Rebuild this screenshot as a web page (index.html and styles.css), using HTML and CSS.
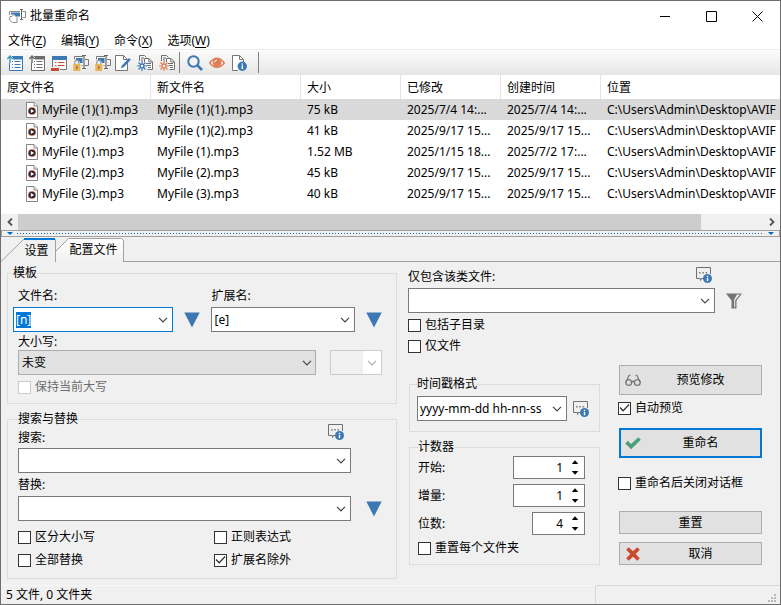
FILE: index.html
```html
<!DOCTYPE html>
<html lang="zh-CN">
<head>
<meta charset="utf-8">
<title>批量重命名</title>
<link rel="stylesheet" href="styles.css">
</head>
<body>
<svg class="defs" aria-hidden="true">
  <symbol id="chevron" viewBox="0 0 10 6"><path d="M1 .8 5 4.8 9 .8" fill="none" stroke="currentColor" stroke-width="1.2"/></symbol>
  <symbol id="triangle" viewBox="0 0 16 16"><path d="M.3 .5H15.7L8 15.5Z" fill="#3c78b4"/></symbol>
  <symbol id="help" viewBox="0 0 16 16">
    <path d="M7 11.5H5.5L4.5 13.5V11.5H.5V.5H14.5V7" fill="none" stroke="#707070"/>
    <path d="M3 5H4.6V6.6H3ZM6.3 5H7.9V6.6H6.3ZM9.6 5H11.2V6.6H9.6Z" fill="#808080"/>
    <circle cx="11.5" cy="11.5" r="4.5" fill="#3c78b4"/><path d="M10.8 8.8H12.2V10H10.8ZM10.8 10.7H12.2V14.2H10.8Z" fill="#fff"/>
  </symbol>
  <symbol id="mp3" viewBox="0 0 12 16">
    <path d="M.5 .5H8L11.5 4V15.5H.5Z" fill="#fff" stroke="#858585"/><path d="M8 .5V4H11.5" fill="#eee" stroke="#858585"/>
    <circle cx="6" cy="9" r="4.1" fill="#ee9470"/><path d="M2 9A4.1 4.1 0 0 0 10 9Z" fill="#8d6490"/><circle cx="6" cy="9" r="3.3" fill="#2b2734"/><path d="M4.8 7V11L8.2 9Z" fill="#fff"/>
  </symbol>
  <symbol id="lock-rename" viewBox="0 0 16 16">
    <path d="M1.5 4.5V1.5H10M12 4.5H15.5V10.5H12M9.5 10.5H8.5" fill="none" stroke="#777"/>
    <path d="M3 3H9.5V8H7Q6.5 5 3 5Z" fill="#3c78b4"/>
    <path d="M9 .5H13M11 .5V13.5M9 13.5H13" fill="none" stroke="#666" stroke-width="1.2"/>
    <path d="M1.8 9V7.4A2 2 0 0 1 5.8 7.4V9" fill="none" stroke="#999" stroke-width="1.2"/>
    <path d="M.3 9H7.3V16H.3Z" fill="#e8b45a"/><path d="M3.2 11H4.4V14H3.2Z" fill="#8b6a2c"/>
  </symbol>
  <symbol id="gear-docs" viewBox="0 0 16 16">
    <path d="M2.5 6V.5H7.5L9.5 2.5M4 3H7M4 5H6" fill="none" stroke="#707070"/>
    <path d="M7.5 7V3.5H12L15.5 7V14.5H10.5" fill="#fff" stroke="#707070"/><path d="M11.8 3.5V7H15.5M9 8.5H14M10 10.5H14M11 12.5H14" fill="none" stroke="#707070"/>
    <path d="M5 6V16M0 11H10M1.5 7.5 8.5 14.5M8.5 7.5 1.5 14.5" stroke="currentColor" stroke-width="1.2"/><circle cx="5" cy="11" r="2.4" fill="currentColor"/><circle cx="5" cy="11" r="1.2" fill="#fff"/>
  </symbol>
</svg>

<main class="window">
  <header class="titlebar">
    <svg class="app-icon" viewBox="0 0 17 14"><path d="M.5 6V2.5H11M13.5 2.5H16.5V8.5H13.5" fill="none" stroke="#888"/><path d="M2 3.5H11V7.5H6.5L5 5.5H2Z" fill="#3c78b4"/><path d="M11 .5H14M12.5 .5V10.5M11 10.5H14" fill="none" stroke="#666"/><path d="M1 7.5H3L5 5.5 8 8.5V13.5H3.5L.5 11Z" fill="#fff" stroke="#909090"/></svg>
    <h1>批量重命名</h1>
    <div class="caption-buttons">
      <button type="button" aria-label="最小化"><svg viewBox="0 0 11 11"><path d="M0 5.5H10" stroke="#000"/></svg></button>
      <button type="button" aria-label="最大化"><svg viewBox="0 0 11 11"><path d="M.5 .5H10.5V10.5H.5Z" fill="none" stroke="#000"/></svg></button>
      <button type="button" aria-label="关闭"><svg viewBox="0 0 11 11"><path d="M.5 .5 10.5 10.5M10.5 .5 .5 10.5" stroke="#000"/></svg></button>
    </div>
  </header>

  <nav class="menubar">
    <button type="button">文件(<u>Z</u>)</button>
    <button type="button">编辑(<u>Y</u>)</button>
    <button type="button">命令(<u>X</u>)</button>
    <button type="button">选项(<u>W</u>)</button>
  </nav>

  <div class="toolbar" role="toolbar">
    <button type="button" aria-label="载入名称"><svg viewBox="0 0 16 16"><path d="M5 1.5H15.5V15.5H2.5V8" fill="#fff" stroke="#3c78b4"/><path d="M6 1H16V4.5H6Z" fill="#3c78b4"/><path d="M5 6.5H6M7.5 6.5H13.5M5 9.5H6M7.5 9.5H13.5M5 12.5H6M7.5 12.5H13.5" stroke="#3c78b4"/><path d="M3 8V1.5M.3 4 3 1 5.7 4" fill="none" stroke="#3c9bb8" stroke-width="1.4"/></svg></button>
    <button type="button" aria-label="还原名称"><svg viewBox="0 0 16 16"><path d="M5 1.5H15.5V15.5H2.5V8" fill="#fff" stroke="#6c6c6c"/><path d="M6 1H16V4.5H6Z" fill="#6c6c6c"/><path d="M5 6.5H6M7.5 6.5H13.5M5 9.5H6M7.5 9.5H13.5M5 12.5H6M7.5 12.5H13.5" stroke="#6c6c6c"/><path d="M3 8V1.5M.3 4 3 1 5.7 4" fill="none" stroke="#6c6c6c" stroke-width="1.4"/></svg></button>
    <button type="button" aria-label="移除项目"><svg viewBox="0 0 16 16"><path d="M2 5H15V14H9V11H2Z" fill="#fff"/><path d="M1 1H16V5H1Z" fill="#3c78b4"/><path d="M4 7.5H5.5M7 7.5H13.5M4 10.5H5.5M7 10.5H13.5" stroke="#cb4a2e"/><path d="M1.5 5V12M15.5 5V14.5H9" fill="none" stroke="#777"/><path d="M0 13H8V16H0Z" fill="#cb4a2e"/></svg></button>
    <button type="button" aria-label="锁定名称"><svg><use href="#lock-rename"/></svg></button>
    <button type="button" aria-label="锁定扩展名"><svg><use href="#lock-rename"/></svg></button>
    <button type="button" class="pull" aria-label="编辑名称"><svg viewBox="0 0 16 16"><path d="M.5 .5H8.5L12.5 4.5V15.5H.5Z" fill="#fff" stroke="#777"/><path d="M8.5 .5V4.5H12.5" fill="none" stroke="#777"/><path d="M7 10.5 14 3 15.8 4.8 9 12 5.7 13.5Z" fill="#3c78b4"/></svg></button>
    <button type="button" class="blue" aria-label="载入预设"><svg><use href="#gear-docs"/></svg></button>
    <button type="button" class="orange" aria-label="清除预设"><svg><use href="#gear-docs"/></svg></button>
    <span class="separator"></span>
    <button type="button" aria-label="搜索"><svg viewBox="0 0 16 16"><circle cx="6.5" cy="6.5" r="5.2" fill="none" stroke="#3c78b4" stroke-width="2"/><path d="M10.2 10.2 15 15" stroke="#3c78b4" stroke-width="2.6"/></svg></button>
    <button type="button" aria-label="查看"><svg viewBox="0 0 16 16"><path d="M.7 8Q8-1.5 15.3 8Q8 16.5 .7 8Z" fill="#fff" stroke="#e07c52" stroke-width="1.5"/><circle cx="8" cy="7.5" r="4.4" fill="#e07c52"/><path d="M5.6 7.5A2.6 2.6 0 0 1 8 5" fill="none" stroke="#fff"/></svg></button>
    <button type="button" aria-label="文件信息"><svg viewBox="0 0 16 16"><path d="M7 15.5H1.5V.5H8.5L12.5 4.5V7" fill="#fff" stroke="#777"/><path d="M8.5 .5V4.5H12.5" fill="none" stroke="#777"/><circle cx="11.3" cy="11.3" r="4.7" fill="#3c78b4"/><path d="M10.6 8.4H12V9.7H10.6ZM10.6 10.5H12V14H10.6Z" fill="#fff"/></svg></button>
    <span class="separator last"></span>
  </div>

  <section class="file-list">
    <table>
      <colgroup><col class="c-name"><col class="c-name"><col class="c-small"><col class="c-small"><col class="c-small"><col></colgroup>
      <thead><tr><th>原文件名</th><th>新文件名</th><th>大小</th><th>已修改</th><th>创建时间</th><th>位置</th></tr></thead>
      <tbody>
        <tr class="selected"><td><svg><use href="#mp3"/></svg>MyFile (1)(1).mp3</td><td>MyFile (1)(1).mp3</td><td>75 kB</td><td>2025/7/4 14:...</td><td>2025/7/4 14:...</td><td>C:\Users\Admin\Desktop\AVIF</td></tr>
        <tr><td><svg><use href="#mp3"/></svg>MyFile (1)(2).mp3</td><td>MyFile (1)(2).mp3</td><td>41 kB</td><td>2025/9/17 15...</td><td>2025/9/17 15...</td><td>C:\Users\Admin\Desktop\AVIF</td></tr>
        <tr><td><svg><use href="#mp3"/></svg>MyFile (1).mp3</td><td>MyFile (1).mp3</td><td>1.52 MB</td><td>2025/1/15 18...</td><td>2025/7/2 17:...</td><td>C:\Users\Admin\Desktop\AVIF</td></tr>
        <tr><td><svg><use href="#mp3"/></svg>MyFile (2).mp3</td><td>MyFile (2).mp3</td><td>45 kB</td><td>2025/9/17 15...</td><td>2025/9/17 15...</td><td>C:\Users\Admin\Desktop\AVIF</td></tr>
        <tr><td><svg><use href="#mp3"/></svg>MyFile (3).mp3</td><td>MyFile (3).mp3</td><td>40 kB</td><td>2025/9/17 15...</td><td>2025/9/17 15...</td><td>C:\Users\Admin\Desktop\AVIF</td></tr>
      </tbody>
    </table>
    <div class="scrollbar">
      <button type="button" aria-label="向左滚动"><svg viewBox="0 0 6 8"><path d="M5 .5 1.5 4 5 7.5" fill="none" stroke="#505050" stroke-width="1.8"/></svg></button>
      <div class="track"><div class="thumb"></div></div>
      <button type="button" aria-label="向右滚动"><svg viewBox="0 0 6 8"><path d="M1 .5 4.5 4 1 7.5" fill="none" stroke="#505050" stroke-width="1.8"/></svg></button>
    </div>
  </section>

  <div class="splitter"><i></i><span></span><i></i></div>

  <div class="tabs" role="tablist">
    <button type="button" role="tab" aria-selected="true" class="tab active">
      <svg viewBox="0 0 55 25"><path d="M0 23.5 22.5 1.5H54.5V24L54 25H0Z" fill="#f0f0f0"/><path d="M0 23.5 22.5 1.5H54.5V24" fill="none" stroke="#a0a0a0"/><path d="M23 1H54" stroke="#0078d7" stroke-width="2"/></svg>
      <span>设置</span>
    </button>
    <button type="button" role="tab" aria-selected="false" class="tab second">
      <svg viewBox="0 0 68 24"><defs><linearGradient id="tabfill" x2="0" y2="1"><stop stop-color="#fff"/><stop offset="1" stop-color="#f0f0f0"/></linearGradient></defs><path d="M0 13 12.5 .5H65.5L67.5 2.5V24H0Z" fill="url(#tabfill)"/><path d="M0 13 12.5 .5H65.5L67.5 2.5V24" fill="none" stroke="#a0a0a0"/></svg>
      <span>配置文件</span>
    </button>
  </div>

  <form class="settings">
    <div class="left-column">
      <fieldset class="template">
        <legend>模板</legend>
        <div class="name-grid">
          <label for="name" class="caption indent">文件名:</label>
          <label for="ext" class="caption ext-label">扩展名:</label>
          <div class="combo focused"><input id="name" type="text" value="[n]"><button type="button" aria-label="展开文件名"><svg><use href="#chevron"/></svg></button></div>
          <button type="button" class="insert" aria-label="插入文件名标记"><svg><use href="#triangle"/></svg></button>
          <div class="combo"><input id="ext" type="text" value="[e]"><button type="button" aria-label="展开扩展名"><svg><use href="#chevron"/></svg></button></div>
          <button type="button" class="insert" aria-label="插入扩展名标记"><svg><use href="#triangle"/></svg></button>
        </div>
        <div class="case-block">
          <label for="case" class="caption tight">大小写:</label>
          <div class="case-row">
            <div class="select"><select id="case"><option>未变</option></select><svg><use href="#chevron"/></svg></div>
            <div class="combo disabled"><input type="text" aria-label="大小写字数" disabled><button type="button" aria-label="展开字数" disabled><svg><use href="#chevron"/></svg></button></div>
          </div>
          <label class="check off"><input type="checkbox" disabled>保持当前大写</label>
        </div>
      </fieldset>

      <fieldset class="search">
        <legend>搜索与替换</legend>
        <div class="search-head"><label for="find">搜索:</label><button type="button" class="icon-button" aria-label="搜索帮助"><svg><use href="#help"/></svg></button></div>
        <div class="search-row"><div class="combo"><input id="find" type="text"><button type="button" aria-label="展开搜索"><svg><use href="#chevron"/></svg></button></div></div>
        <label for="replace" class="caption">替换:</label>
        <div class="search-row"><div class="combo"><input id="replace" type="text"><button type="button" aria-label="展开替换"><svg><use href="#chevron"/></svg></button></div>
          <button type="button" class="insert" aria-label="插入替换标记"><svg><use href="#triangle"/></svg></button></div>
        <div class="search-options">
          <label class="check"><input type="checkbox">区分大小写</label>
          <label class="check"><input type="checkbox">正则表达式</label>
          <label class="check"><input type="checkbox">全部替换</label>
          <label class="check"><input type="checkbox" checked>扩展名除外</label>
        </div>
      </fieldset>
    </div>

    <div class="right-column">
      <div class="filter">
        <div class="filter-head"><label for="filter">仅包含该类文件:</label><button type="button" class="icon-button" aria-label="筛选帮助"><svg><use href="#help"/></svg></button></div>
        <div class="filter-row">
          <div class="combo"><input id="filter" type="text"><button type="button" aria-label="展开筛选"><svg><use href="#chevron"/></svg></button></div>
          <button type="button" class="icon-button" aria-label="筛选"><svg viewBox="0 0 16 16"><path d="M0 .5H16L10.5 7.5V15.5H5.5V7.5Z" fill="#747474"/><path d="M11 1.6H13.8L9.2 7.3V14.3H8.2V6.6Z" fill="#f0f0f0"/></svg></button>
        </div>
        <label class="check"><input type="checkbox">包括子目录</label>
        <label class="check"><input type="checkbox">仅文件</label>
      </div>

      <div class="lower">
        <div class="middle">
          <fieldset class="timestamp">
            <legend>时间戳格式</legend>
            <div class="stamp-row">
              <div class="combo"><input type="text" aria-label="时间戳格式" value="yyyy-mm-dd hh-nn-ss"><button type="button" aria-label="展开格式"><svg><use href="#chevron"/></svg></button></div>
              <button type="button" class="icon-button" aria-label="格式帮助"><svg><use href="#help"/></svg></button>
            </div>
          </fieldset>
          <fieldset class="counter">
            <legend>计数器</legend>
            <div class="count-row"><label for="start">开始:</label><div class="spin"><input id="start" type="text" value="1"><div class="arrows"><button type="button" class="up" aria-label="增加开始"></button><button type="button" class="down" aria-label="减少开始"></button></div></div></div>
            <div class="count-row"><label for="step">增量:</label><div class="spin"><input id="step" type="text" value="1"><div class="arrows"><button type="button" class="up" aria-label="增加增量"></button><button type="button" class="down" aria-label="减少增量"></button></div></div></div>
            <div class="count-row"><label for="digits">位数:</label><div class="spin narrow"><input id="digits" type="text" value="4"><div class="arrows"><button type="button" class="up" aria-label="增加位数"></button><button type="button" class="down" aria-label="减少位数"></button></div></div></div>
            <label class="check"><input type="checkbox">重置每个文件夹</label>
          </fieldset>
        </div>

        <div class="actions">
          <button type="button" class="push tall"><svg viewBox="0 0 16 16"><path d="M1 10 4 3.5 5.5 3M15 10 12 3.5 10.5 3M6.5 10Q8 8.5 9.5 10" fill="none" stroke="#777" stroke-width="1.2"/><circle cx="3.7" cy="10.5" r="2.9" fill="none" stroke="#777" stroke-width="1.4"/><circle cx="12.3" cy="10.5" r="2.9" fill="none" stroke="#777" stroke-width="1.4"/></svg><span>预览修改</span></button>
          <label class="check"><input type="checkbox" checked>自动预览</label>
          <button type="submit" class="push tall default"><svg viewBox="0 0 16 16"><path d="M.3 8.4 2.8 5.8 6.1 9 13.3 2.2 15.8 4.8 6.1 14.2Z" fill="#4ba07c"/></svg><span>重命名</span></button>
          <label class="check close-after"><input type="checkbox">重命名后关闭对话框</label>
          <button type="reset" class="push"><span>重置</span></button>
          <button type="button" class="push cancel"><svg viewBox="0 0 16 16"><path d="M3.7 1.2 8 5.3 12.3 1.2 14.8 3.7 10.7 8 14.8 12.3 12.3 14.8 8 10.7 3.7 14.8 1.2 12.3 5.3 8 1.2 3.7Z" fill="#cb4a2e"/></svg><span>取消</span></button>
        </div>
      </div>
    </div>
  </form>

  <footer class="statusbar">
    <div class="status-text">5 文件, 0 文件夹</div>
    <div class="status-extra"><svg viewBox="0 0 8 8"><path d="M6 0H8V2H6ZM3 3H5V5H3ZM6 3H8V5H6ZM0 6H2V8H0ZM3 6H5V8H3ZM6 6H8V8H6Z" fill="#b8b8b8"/></svg></div>
  </footer>
</main>
<script src="app.js"></script>
</body>
</html>
```
FILE: styles.css
```css
* { box-sizing: border-box; }

body {
  margin: 0;
  background: #f0f0f0;
  color: #000;
  font: 12px/16px "Noto Sans", "Noto Sans CJK SC", sans-serif;
}

button, input, select { font: inherit; color: inherit; }
button { padding: 0; border: 0; background: none; }
svg { display: block; }
.defs { position: absolute; width: 0; height: 0; }

.window {
  display: flex;
  flex-direction: column;
  min-height: 100vh;
  border: 1px solid #6e6c6c;
  overflow: hidden;
}

/* Title and menu */
.titlebar {
  display: flex;
  align-items: center;
  height: 30px;
  padding-left: 8px;
  background: #fff;
}
.app-icon { width: 17px; height: 14px; margin-right: 4px; }
.titlebar h1 { margin: 0; font-size: 12px; font-weight: 400; flex: 1; }
.caption-buttons { display: flex; height: 100%; }
.caption-buttons button { width: 46px; display: grid; place-items: center; }
.caption-buttons svg { width: 11px; height: 11px; }

.menubar {
  display: flex;
  gap: 15px;
  height: 19px;
  padding: 2px 0 0 7px;
  background: #fff;
  border-bottom: 1px solid #ececec;
}
.menubar u { text-underline-offset: 2px; }

/* Toolbar */
.toolbar {
  display: flex;
  align-items: center;
  gap: 6px;
  height: 25px;
  padding-left: 6px;
  background: linear-gradient(#fcfcfc, #e6e6e6);
}
.toolbar svg { width: 16px; height: 16px; }
.toolbar .pull { margin-left: -2px; }
.toolbar .blue { color: #3c78b4; }
.toolbar .orange { color: #e07c52; }
.separator { width: 1px; height: 21px; margin: 0 1px 0 -2px; background: #808080; }
.separator.last { margin-left: 5px; }

/* File list */
.file-list { background: #fff; overflow: hidden; }
table { width: 100%; margin-bottom: 10px; border-spacing: 0; table-layout: fixed; }
.c-name { width: 150px; }
.c-small { width: 100px; }
th, td {
  padding: 1px 0 0 6px;
  overflow: hidden;
  text-align: left;
  white-space: nowrap;
  font-weight: 400;
}
th { height: 24px; border-right: 1px solid #e5e5e5; }
th:last-child { border-right: 0; }
td { height: 21px; }
td:first-child { padding-left: 25px; }
td svg { display: inline-block; width: 12px; height: 16px; margin-right: 4px; vertical-align: -4px; }
.selected { background: #d9d9d9; }

.scrollbar { display: flex; height: 16px; background: #f0f0f0; }
.scrollbar button { width: 17px; display: grid; place-items: center; }
.scrollbar svg { width: 6px; height: 8px; }
.track { flex: 1; }
.thumb { width: 91.7%; height: 100%; background: #cdcdcd; }

.splitter {
  display: flex;
  align-items: center;
  justify-content: space-between;
  gap: 4px;
  height: 7px;
  padding: 0 5px;
  border: 1px solid #a0a0a0;
}
.splitter i { width: 6px; height: 3px; background: #0066cc; clip-path: polygon(0 0, 100% 0, 50% 100%); }
.splitter span { flex: 1; height: 1px; background: repeating-linear-gradient(90deg, #0066cc 0 1px, transparent 1px 3px); }

/* Tabs */
.tabs { display: flex; height: 25px; padding-top: 1px; border-bottom: 1px solid #a0a0a0; }
.tab { position: relative; height: 24px; }
.tab svg { position: absolute; inset: 0; width: 100%; height: 24px; }
.tab span { position: relative; }
.tab.active { width: 55px; height: 25px; padding-left: 16px; }
.tab.active svg { height: 25px; }
.tab.second { width: 68px; padding-left: 7px; }

/* Shared controls */
.combo {
  display: flex;
  height: 25px;
  min-width: 0;
  background: #fff;
  border: 1px solid #7a7a7a;
}
.combo input {
  flex: 1;
  width: 0;
  min-width: 0;
  padding: 0 2px;
  border: 0;
  outline: 0;
  background: none;
}
.combo input::selection { background: #0078d7; color: #fff; }
.combo button { width: 18px; display: grid; place-items: center; color: #444; }
.combo button svg, .select svg { width: 10px; height: 6px; }
.combo.focused { border-color: #0078d7; }
.combo.disabled { border-color: #ccc; background: #f0f0f0; }
.combo.disabled button { background: #fff; color: #b0b0b0; }

.select { position: relative; min-width: 0; }
.select select {
  appearance: none;
  display: block;
  width: 100%;
  height: 25px;
  padding: 0 3px;
  border: 1px solid #adadad;
  border-radius: 0;
  background: #e1e1e1;
}
.select svg { position: absolute; right: 4px; top: 10px; color: #444; pointer-events: none; }

.insert svg, .icon-button svg { width: 16px; height: 16px; }

.check { display: flex; align-items: center; gap: 4px; height: 16px; white-space: nowrap; }
.check input {
  appearance: none;
  flex: none;
  width: 13px;
  height: 13px;
  margin: 0;
  border: 1px solid #333;
  background: #fff;
}
.check input:checked::before {
  content: "";
  display: block;
  width: 11px;
  height: 11px;
  background: #333;
  clip-path: polygon(5% 50%, 14% 42%, 38% 66%, 88% 14%, 96% 23%, 38% 83%);
}
.check.off { color: #6d6d6d; }
.check.off input { border-color: #ccc; }

fieldset { min-width: 0; margin: 0; padding: 0; border: 1px solid #dcdcdc; }
legend { padding: 0; }
.caption { display: block; margin-bottom: 3px; }
.caption.tight { margin-bottom: 0; }

/* Settings page */
.settings {
  flex: 1;
  display: grid;
  grid-template-columns: 390fr 371fr;
  gap: 12px;
  padding: 3px 0 0 6px;
}
.left-column { display: flex; flex-direction: column; gap: 7px; min-width: 0; }

.template { padding: 7px 14px 8px 5px; }
.name-grid {
  display: grid;
  grid-template-columns: 161fr 16px 144fr 16px;
  column-gap: 11px;
  align-items: center;
}
.indent { margin-left: 5px; }
.ext-label { grid-column: 3 / 5; }
.case-block { padding: 2px 0 0 5px; }
.case-row { display: grid; grid-template-columns: 298fr 52fr; gap: 14px; margin-bottom: 4px; }

.search { padding: 0 14px 10px 10px; }
.search-head { display: flex; justify-content: space-between; height: 24px; margin-top: -3px; padding: 0 38px 2px 0; }
.search-head label { align-self: flex-end; }
.search-head .icon-button { align-self: flex-start; }
.search-row { display: grid; grid-template-columns: 1fr 16px; gap: 15px; align-items: center; margin-bottom: 4px; }
.search-options { display: grid; grid-template-columns: 196fr 168fr; row-gap: 7px; padding-top: 4px; }

.right-column { min-width: 0; }
.filter { margin-left: -1px; }
.filter-head { display: flex; justify-content: space-between; padding: 0 68px 3px 0; }
.filter-head label { padding-top: 4px; }
.filter-row { display: grid; grid-template-columns: 1fr 16px; gap: 11px; align-items: center; padding-right: 38px; margin-bottom: 4px; }
.filter .check { margin-bottom: 5px; }

.lower { display: grid; grid-template-columns: 191fr 143fr; gap: 19px; padding: 6px 18px 0 0; }
.middle { display: flex; flex-direction: column; gap: 7px; padding-top: 11px; }
.timestamp { padding: 4px 10px 10px 7px; }
.stamp-row { display: grid; grid-template-columns: 1fr 16px; gap: 6px; align-items: center; }
.counter { padding: 1px 14px 8px 8px; }
.count-row { display: flex; justify-content: space-between; align-items: center; margin-bottom: 5px; }

.spin { display: flex; width: 72px; height: 23px; border: 1px solid #7a7a7a; background: #fff; }
.spin.narrow { width: 53px; }
.spin input { flex: 1; width: 0; min-width: 0; padding: 0 3px; border: 0; outline: 0; text-align: right; background: none; }
.arrows { display: grid; grid-template-rows: 1fr 1fr; width: 18px; }
.arrows button { display: grid; place-items: center; }
.arrows button::before { content: ""; width: 7px; height: 4px; background: #000; }
.arrows .up::before { clip-path: polygon(0 100%, 50% 0, 100% 100%); }
.arrows .down::before { clip-path: polygon(0 0, 100% 0, 50% 100%); }

.actions { display: flex; flex-direction: column; }
.actions .check { margin: 5px 0 12px -1px; }
.actions .close-after { margin: 17px 0 20px -1px; }
.push {
  display: flex;
  align-items: center;
  height: 23px;
  padding: 0 5px;
  border: 1px solid #adadad;
  background: #e1e1e1;
}
.push svg { flex: none; width: 16px; height: 16px; }
.push svg + span { padding-left: 4px; }
.push span { flex: 1; text-align: center; }
.push.tall { height: 30px; }
.push.default { padding: 0 4px; border: 2px solid #0078d7; }
.push.cancel { margin-top: 8px; }

/* Status bar */
.statusbar { display: grid; grid-template-columns: 595fr 184fr; height: 19px; }
.status-text { padding: 1px 5px; border-top: 1px solid #f7f7f7; border-right: 1px solid #d7d7d7; }
.status-extra { display: flex; justify-content: flex-end; align-items: flex-end; padding: 0 4px 2px 0; border-top: 1px solid #d7d7d7; }
.status-extra svg { width: 8px; height: 8px; }
```
FILE: app.js
```js
const nameField = document.getElementById("name");
nameField.focus();
nameField.select();
```
